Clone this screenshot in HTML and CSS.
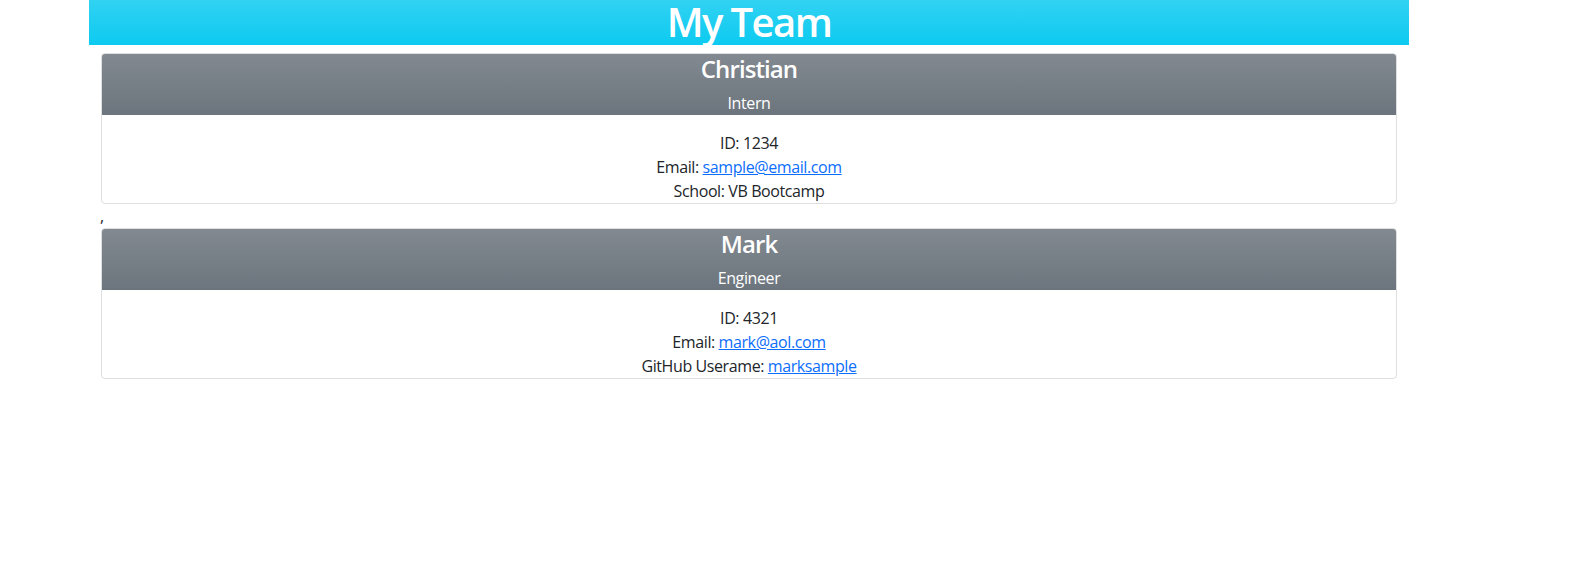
FILE: index.html
```html
<!DOCTYPE html>
<html lang="en">
<head>
<meta charset="utf-8">
<title>My Team</title>
<link rel="stylesheet" href="styles.css">
</head>
<body>
<div class="page">
  <header class="banner">
    <h1 class="banner-title">My Team</h1>
  </header>
  <main class="team">
    <div class="card">
      <div class="card-header">
        <h4 class="card-name">Christian</h4>
        <div class="card-role">Intern</div>
      </div>
      <div class="card-body">
        <p class="line">ID: 1234</p>
        <p class="line">Email: <a href="#">sample@email.com</a></p>
        <p class="line">School: VB Bootcamp</p>
      </div>
    </div>
    <div class="sep">,</div>
    <div class="card">
      <div class="card-header">
        <h4 class="card-name">Mark</h4>
        <div class="card-role">Engineer</div>
      </div>
      <div class="card-body">
        <p class="line">ID: 4321</p>
        <p class="line">Email: <a href="#">mark@aol.com</a></p>
        <p class="line">GitHub Userame: <a href="#">marksample</a></p>
      </div>
    </div>
  </main>
</div>
</body>
</html>
```

FILE: styles.css
```css
html, body {
  margin: 0;
  padding: 0;
  background: #fff;
}
body {
  font-family: "Open Sans", "Noto Sans", sans-serif;
  font-size: 16px;
  line-height: 24px;
  letter-spacing: -0.4px;
  color: #212529;
}
.page {
  width: 1320px;
  margin-left: 89px;
}
.banner {
  height: 45px;
  background: linear-gradient(180deg, #31d2f2 0%, #0dcaf0 100%);
  text-align: center;
}
.banner-title {
  margin: 0;
  font-size: 40px;
  line-height: 44px;
  font-weight: 600;
  letter-spacing: -1.6px;
  color: #fff;
}
.team {
  padding: 8px 12px 0;
}
.card {
  border: 1px solid rgba(0, 0, 0, 0.125);
  border-radius: 4px;
  text-align: center;
}
.card-header {
  background: linear-gradient(180deg, #828990 0%, #6c757d 100%);
  border-radius: 3px 3px 0 0;
  color: #fff;
}
.card-name {
  margin: 0 0 7px;
  padding-top: 1px;
  font-size: 24px;
  line-height: 28.8px;
  font-weight: 600;
  letter-spacing: -0.9px;
}
.card-role {
  line-height: 24px;
}
.card-body {
  padding-top: 16px;
}
.line {
  margin: 0;
}
.line a {
  color: #0d6efd;
  text-decoration: underline;
}
.sep {
  line-height: 24px;
  height: 24px;
  margin-left: -1px;
}
```
